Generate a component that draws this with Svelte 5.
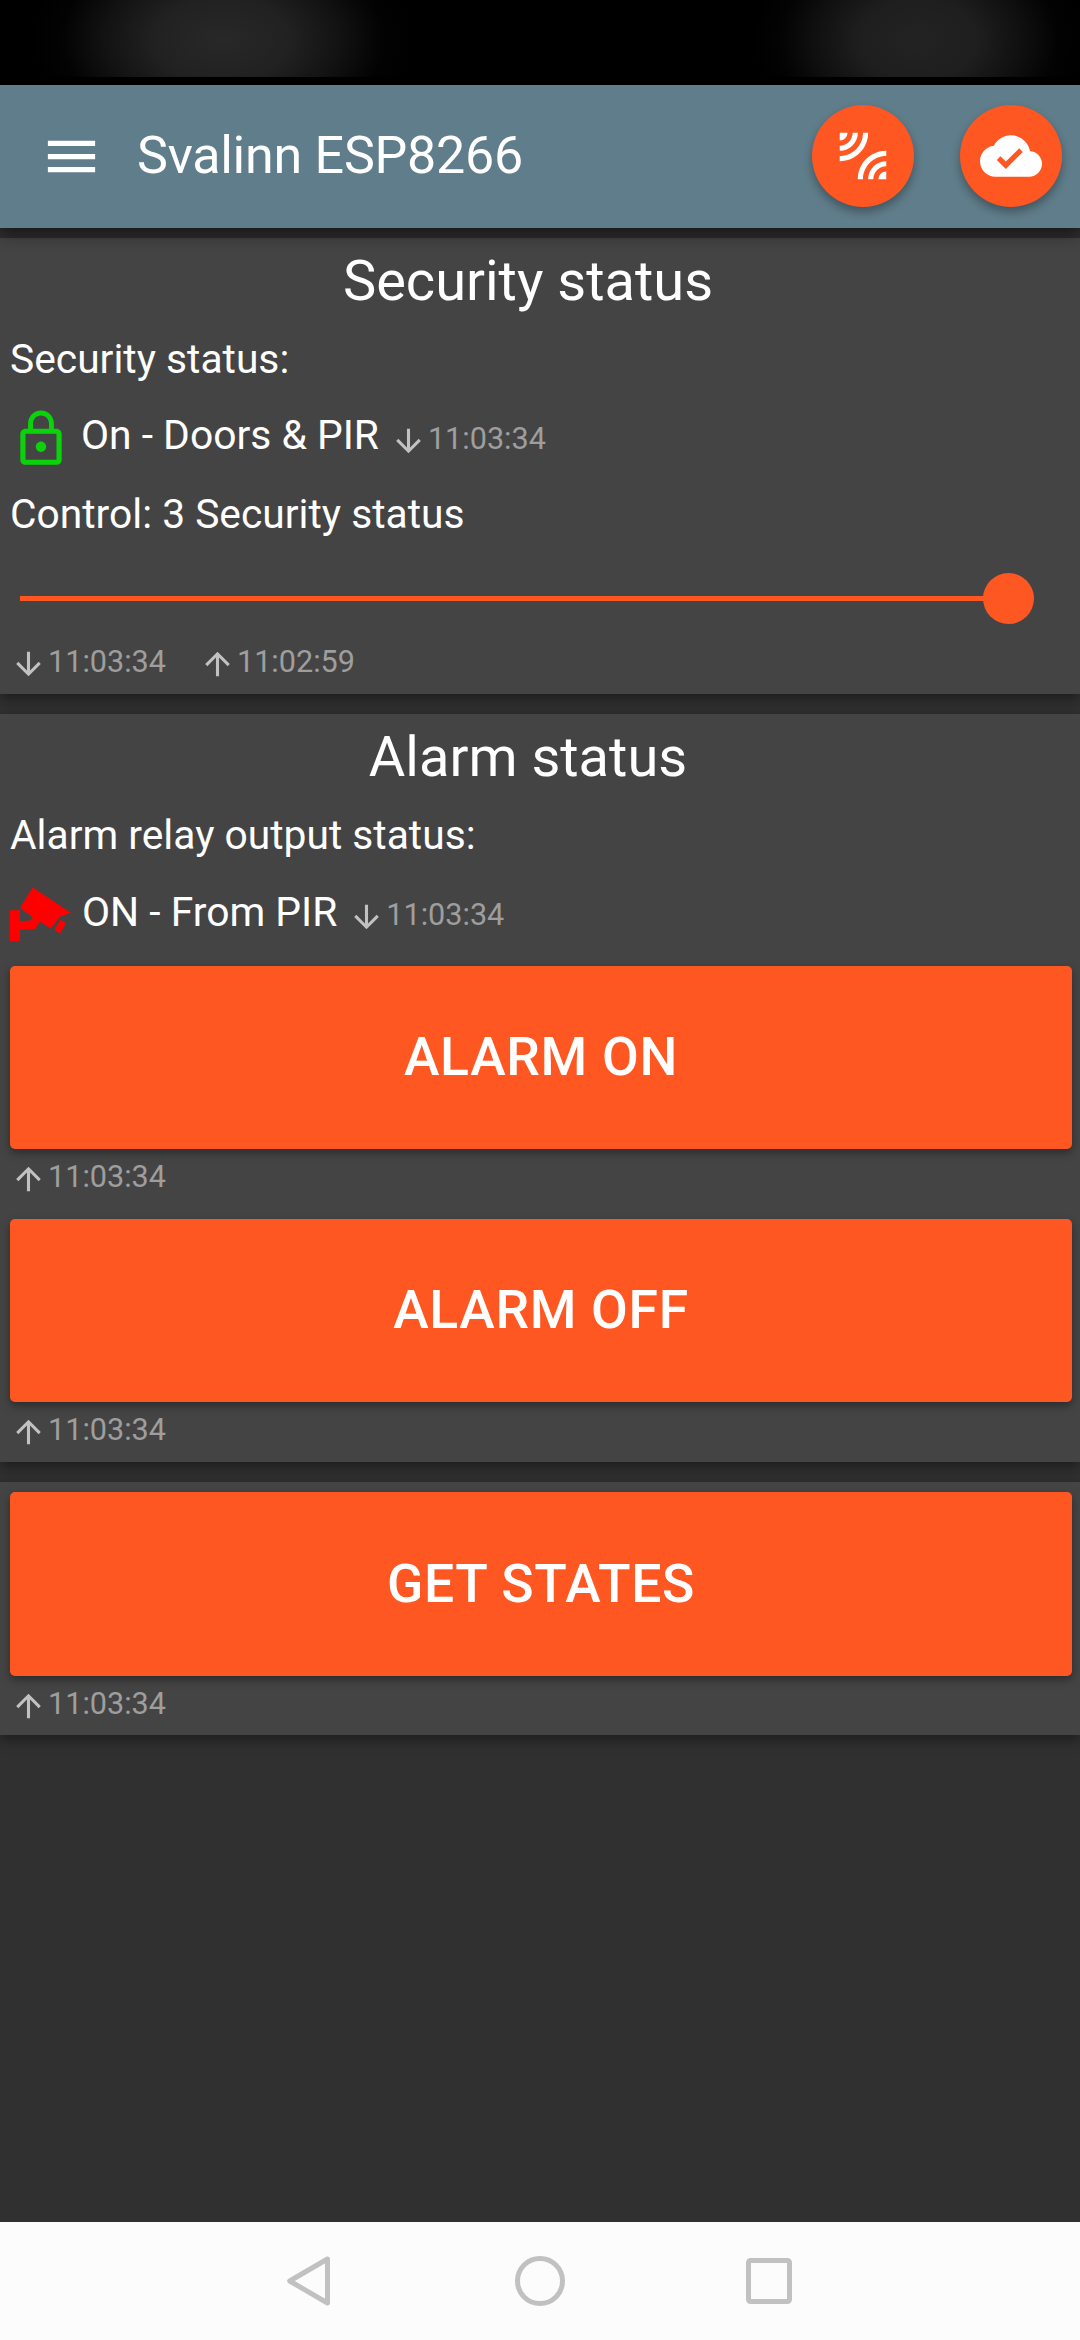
<script>
  const menuPath = 'M3 18h18v-2H3v2zm0-5h18v-2H3v2zm0-7v2h18V6H3z';
  const leakPath =
    'M6 3H3v3c1.66 0 3-1.34 3-3zm8 0h-2c0 4.97-4.03 9-9 9v2c6.08 0 11-4.93 11-11zm-4 0H8c0 2.76-2.24 5-5 5v2c3.87 0 7-3.13 7-7zm0 18h2c0-4.97 4.03-9 9-9v-2c-6.07 0-11 4.93-11 11zm8 0h3v-3c-1.66 0-3 1.34-3 3zm-4 0h2c0-2.76 2.24-5 5-5v-2c-3.87 0-7 3.13-7 7z';
  const cloudPath =
    'M19.35 10.04C18.67 6.59 15.64 4 12 4 9.11 4 6.6 5.64 5.35 8.04 2.34 8.36 0 10.91 0 14c0 3.31 2.69 6 6 6h13c2.76 0 5-2.24 5-5 0-2.64-2.05-4.78-4.65-4.96zM10 17l-3.5-3.5 1.41-1.41L10 14.17 15.18 9l1.41 1.41L10 17z';
  const lockPath =
    'M12 17c1.1 0 2-.9 2-2s-.9-2-2-2-2 .9-2 2 .9 2 2 2zm6-9h-1V6c0-2.76-2.24-5-5-5S7 3.24 7 6v2H6c-1.1 0-2 .9-2 2v10c0 1.1.9 2 2 2h12c1.1 0 2-.9 2-2V10c0-1.1-.9-2-2-2zM8.9 6c0-1.71 1.39-3.1 3.1-3.1s3.1 1.39 3.1 3.1v2H8.9V6zM18 20H6V10h12v10z';
  const downPath = 'M20 12l-1.41-1.41L13 16.17V4h-2v12.17l-5.58-5.59L4 12l8 8 8-8z';
  const upPath = 'M4 12l1.41 1.41L11 7.83V20h2V7.83l5.58 5.59L20 12l-8-8-8 8z';
  let level = $state(3);
  const maxLevel = 3;
</script>

{#snippet stamp(dir, time)}
  <span class="stamp">
    <svg viewBox="0 0 24 24"><path d={dir === 'down' ? downPath : upPath} /></svg>
    <span>{time}</span>
  </span>
{/snippet}

<div class="screen">
  <div class="statusbar"><div class="glow"></div></div>

  <header>
    <svg class="menu" viewBox="0 0 24 24"><path d={menuPath} /></svg>
    <h1>Svalinn ESP8266</h1>
    <button class="fab" aria-label="Connection"><svg viewBox="0 0 24 24"><path d={leakPath} /></svg></button>
    <button class="fab" aria-label="Cloud"><svg viewBox="0 0 24 24"><path d={cloudPath} /></svg></button>
  </header>

  <main>
    <section>
      <h2>Security status</h2>
      <p class="label">Security status:</p>
      <div class="state">
        <svg class="lock" viewBox="0 0 24 24"><path d={lockPath} /></svg>
        <span class="value">On - Doors &amp; PIR</span>
        {@render stamp('down', '11:03:34')}
      </div>
      <p class="label control">Control: {level} Security status</p>
      <div class="slider">
        <div class="track" style:width="{(level / maxLevel) * 100}%"><div class="thumb"></div></div>
      </div>
      <div class="times">
        {@render stamp('down', '11:03:34')}
        {@render stamp('up', '11:02:59')}
      </div>
    </section>

    <section class="alarm">
      <h2>Alarm status</h2>
      <p class="label">Alarm relay output status:</p>
      <div class="state">
        <svg class="camera" viewBox="0 0 63 63">
          <path d="M22.700 4.500L60.800 29.700L49.500 34L41 45.500L30 38.700L25 45.900L10 47V58.300H0V27.200H10V38.300L20 37.500L23.300 34.700L10 24.700Z" />
          <path d="M50.300 36.700L56 39.700L50 50.500L44.300 46.700Z" />
        </svg>
        <span class="value">ON - From PIR</span>
        {@render stamp('down', '11:03:34')}
      </div>
      <button class="action">ALARM ON</button>
      <div class="sent">{@render stamp('up', '11:03:34')}</div>
      <button class="action">ALARM OFF</button>
      <div class="sent">{@render stamp('up', '11:03:34')}</div>
    </section>

    <section class="states">
      <button class="action">GET STATES</button>
      <div class="sent">{@render stamp('up', '11:03:34')}</div>
    </section>
  </main>

  <nav>
    <svg viewBox="0 0 60 60"><path d="M46.500 8L8.700 30L46.500 52Z" /></svg>
    <svg viewBox="0 0 60 60"><circle cx="30" cy="30" r="22.500" /></svg>
    <svg viewBox="0 0 60 60"><rect x="9.500" y="9.500" width="41" height="41" rx="2" /></svg>
  </nav>
</div>

<style>
  :global(body) {
    margin: 0;
    background: #303030;
  }
  .screen {
    width: 1080px;
    height: 2340px;
    display: flex;
    flex-direction: column;
    overflow: hidden;
    background: #303030;
    color: #fff;
    font-family: Roboto, sans-serif;
  }
  h1, h2, p {
    margin: 0;
    font-weight: 400;
  }
  svg {
    display: block;
    flex: none;
    fill: currentColor;
  }
  button {
    border: 0;
    padding: 0;
    color: #fff;
    background: #ff5722;
    font-family: inherit;
  }
  .statusbar {
    flex: none;
    height: 85px;
    background: #000;
  }
  .glow {
    height: 77px;
    background:
      radial-gradient(ellipse 190px 120px at 222px 40px, #282828 0%, #212121 36%, #121212 62%, #030303 84%, #000 100%),
      radial-gradient(ellipse 165px 120px at 918px 40px, #232323 0%, #1e1e1e 36%, #101010 62%, #030303 84%, transparent 100%);
    background-size: 540px 77px, 1080px 77px;
    background-repeat: no-repeat;
  }
  header {
    position: relative;
    z-index: 1;
    flex: none;
    height: 143px;
    box-sizing: border-box;
    padding: 0 18px 1px 40px;
    display: flex;
    align-items: center;
    background: #607d8b;
    box-shadow: 0 8px 14px rgba(0, 0, 0, 0.38), 0 2px 6px rgba(0, 0, 0, 0.15);
  }
  .menu {
    width: 63px;
    height: 63px;
  }
  h1 {
    flex: 1;
    margin-left: 34px;
    font-size: 52px;
    line-height: 62px;
    letter-spacing: -0.25px;
  }
  .fab {
    width: 102px;
    height: 102px;
    margin-left: 46px;
    border-radius: 50%;
    display: flex;
    align-items: center;
    justify-content: center;
    box-shadow: 0 5px 10px rgba(0, 0, 0, 0.32);
  }
  .fab svg {
    width: 62px;
    height: 62px;
  }
  main {
    flex: 1;
    padding-top: 10px;
    display: flex;
    flex-direction: column;
    gap: 20px;
  }
  section {
    box-sizing: border-box;
    height: 456px;
    padding: 0 8px 0 10px;
    background: #444;
    box-shadow: 0 5px 12px rgba(0, 0, 0, 0.4);
  }
  .alarm {
    height: 748px;
  }
  .states {
    height: 253px;
    padding-top: 10px;
  }
  h2 {
    margin: 0 16px 0 -10px;
    padding-top: 10px;
    text-align: center;
    font-size: 56px;
    line-height: 66px;
  }
  .label {
    margin-top: 18px;
    height: 55px;
    font-size: 40.75px;
    line-height: 54px;
  }
  .state {
    margin-top: 20px;
    height: 63px;
    display: flex;
    align-items: center;
  }
  .lock,
  .camera {
    width: 62px;
    height: 62px;
    color: #0bd30b;
  }
  .camera {
    width: 63px;
    height: 63px;
    color: #f00;
  }
  .value {
    margin-left: 9px;
    padding-bottom: 7px;
    font-size: 40.8px;
    line-height: 54px;
  }
  .alarm .value {
    padding-bottom: 5px;
  }
  .stamp {
    display: flex;
    align-items: center;
    height: 37px;
    color: #9e9e9e;
    font-size: 30.6px;
    line-height: 37px;
  }
  .stamp svg {
    width: 37px;
    height: 37px;
    margin-right: 1px;
    color: #c1c1c1;
    transform: translateY(2.5px);
  }
  .state .stamp {
    margin-left: 11px;
  }
  .control {
    margin-top: 17px;
  }
  .slider {
    height: 51px;
    margin: 31px 64px 0 10px;
    display: flex;
    align-items: center;
  }
  .track {
    height: 5px;
    display: flex;
    align-items: center;
    justify-content: flex-end;
    background: #ff5722;
  }
  .thumb {
    flex: none;
    width: 51px;
    height: 51px;
    margin-right: -26px;
    border-radius: 50%;
    background: #ff5722;
  }
  .times {
    margin-top: 19px;
    display: flex;
    gap: 33px;
  }
  .action {
    display: block;
    width: 1062px;
    height: 183px;
    padding-bottom: 2px;
    border-radius: 5px;
    font-size: 53.4px;
    font-weight: 500;
    letter-spacing: 0.7px;
    box-shadow: 0 4px 9px rgba(0, 0, 0, 0.36);
  }
  .states .action {
    height: 184px;
  }
  .state + .action {
    margin-top: 20px;
  }
  .sent {
    padding: 9px 0 24px;
  }
  nav {
    flex: none;
    height: 118px;
    display: flex;
    justify-content: center;
    align-items: center;
    gap: 169px;
    background: #fcfcfc;
    color: #c1c1c1;
  }
  nav svg {
    width: 60px;
    height: 60px;
    fill: none;
    stroke: currentColor;
    stroke-width: 5;
    stroke-linejoin: round;
  }
</style>
